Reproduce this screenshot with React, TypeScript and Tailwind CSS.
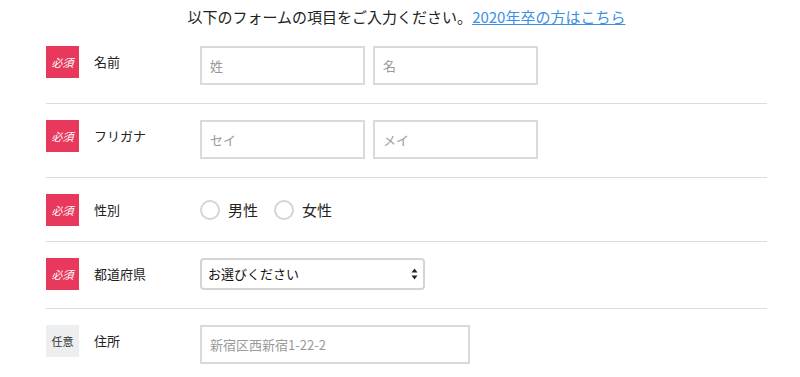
import React from "react";

const font = { fontFamily: '"Noto Sans CJK JP", "Noto Sans", sans-serif' };

function Badge({ required }: { required: boolean }) {
  return required ? (
    <div className="flex h-[32px] w-[33px] shrink-0 items-center justify-center bg-[#e8385b] text-[11px] italic text-white">
      必須
    </div>
  ) : (
    <div className="flex h-[32px] w-[33px] shrink-0 items-center justify-center bg-[#eceeef] text-[11px] text-[#333]">
      任意
    </div>
  );
}

function Row({
  required,
  label,
  children,
  pb,
  last,
}: {
  required: boolean;
  label: string;
  children: React.ReactNode;
  pb: string;
  last?: boolean;
}) {
  return (
    <div className={`flex items-start pt-[16px] ${pb} ${last ? "" : "border-b border-[#dcdcdc]"}`}>
      <div className="flex h-[32px] w-[154px] shrink-0 items-center">
        <Badge required={required} />
        <span className="ml-[15px] text-[13px] text-[#222]">{label}</span>
      </div>
      {children}
    </div>
  );
}

function Input({ w, placeholder }: { w: string; placeholder: string }) {
  return (
    <input
      className={`${w} h-[39px] border-2 border-[#dadada] bg-white px-[8px] text-[13px] text-[#333] outline-none placeholder:text-[#9a9a9a]`}
      placeholder={placeholder}
      style={font}
    />
  );
}

function Radio({ label }: { label: string }) {
  return (
    <label className="flex items-center">
      <span className="h-[20px] w-[20px] rounded-full border-2 border-[#d4d4d4] bg-white" />
      <span className="ml-[8px] text-[15px] text-[#222]">{label}</span>
    </label>
  );
}

export default function App() {
  return (
    <div className="h-[377px] w-[800px] overflow-hidden bg-white" style={font}>
      <div className="ml-[46px] w-[721px]">
        <div className="h-[30px] pt-[7px] text-center text-[15px] leading-[20px] text-[#222]">
          以下のフォームの項目をご入力ください。
          <a href="#" className="text-[#3b8fe6] underline">
            2020年卒の方はこちら
          </a>
        </div>

        <Row required label="名前" pb="pb-[18px]">
          <div className="flex gap-[8px]">
            <Input w="w-[165px]" placeholder="姓" />
            <Input w="w-[165px]" placeholder="名" />
          </div>
        </Row>

        <Row required label="フリガナ" pb="pb-[18px]">
          <div className="flex gap-[8px]">
            <Input w="w-[165px]" placeholder="セイ" />
            <Input w="w-[165px]" placeholder="メイ" />
          </div>
        </Row>

        <Row required label="性別" pb="pb-[15px]">
          <div className="flex h-[32px] items-center gap-[16px]">
            <Radio label="男性" />
            <Radio label="女性" />
          </div>
        </Row>

        <Row required label="都道府県" pb="pb-[18px]">
          <div className="flex h-[32px] w-[225px] items-center justify-between rounded-[4px] border-2 border-[#d4d4d4] bg-white pl-[6px] pr-[5px] text-[13px] text-[#111]">
            <span>お選びください</span>
            <svg width="7" height="12" viewBox="0 0 7 12">
              <path d="M3.5 0.5 L6.5 4.5 L0.5 4.5 Z" fill="#222" />
              <path d="M3.5 11.5 L6.5 7.5 L0.5 7.5 Z" fill="#222" />
            </svg>
          </div>
        </Row>

        <Row required={false} label="住所" pb="pb-[14px]" last>
          <Input w="w-[270px]" placeholder="新宿区西新宿1-22-2" />
        </Row>
      </div>
    </div>
  );
}
